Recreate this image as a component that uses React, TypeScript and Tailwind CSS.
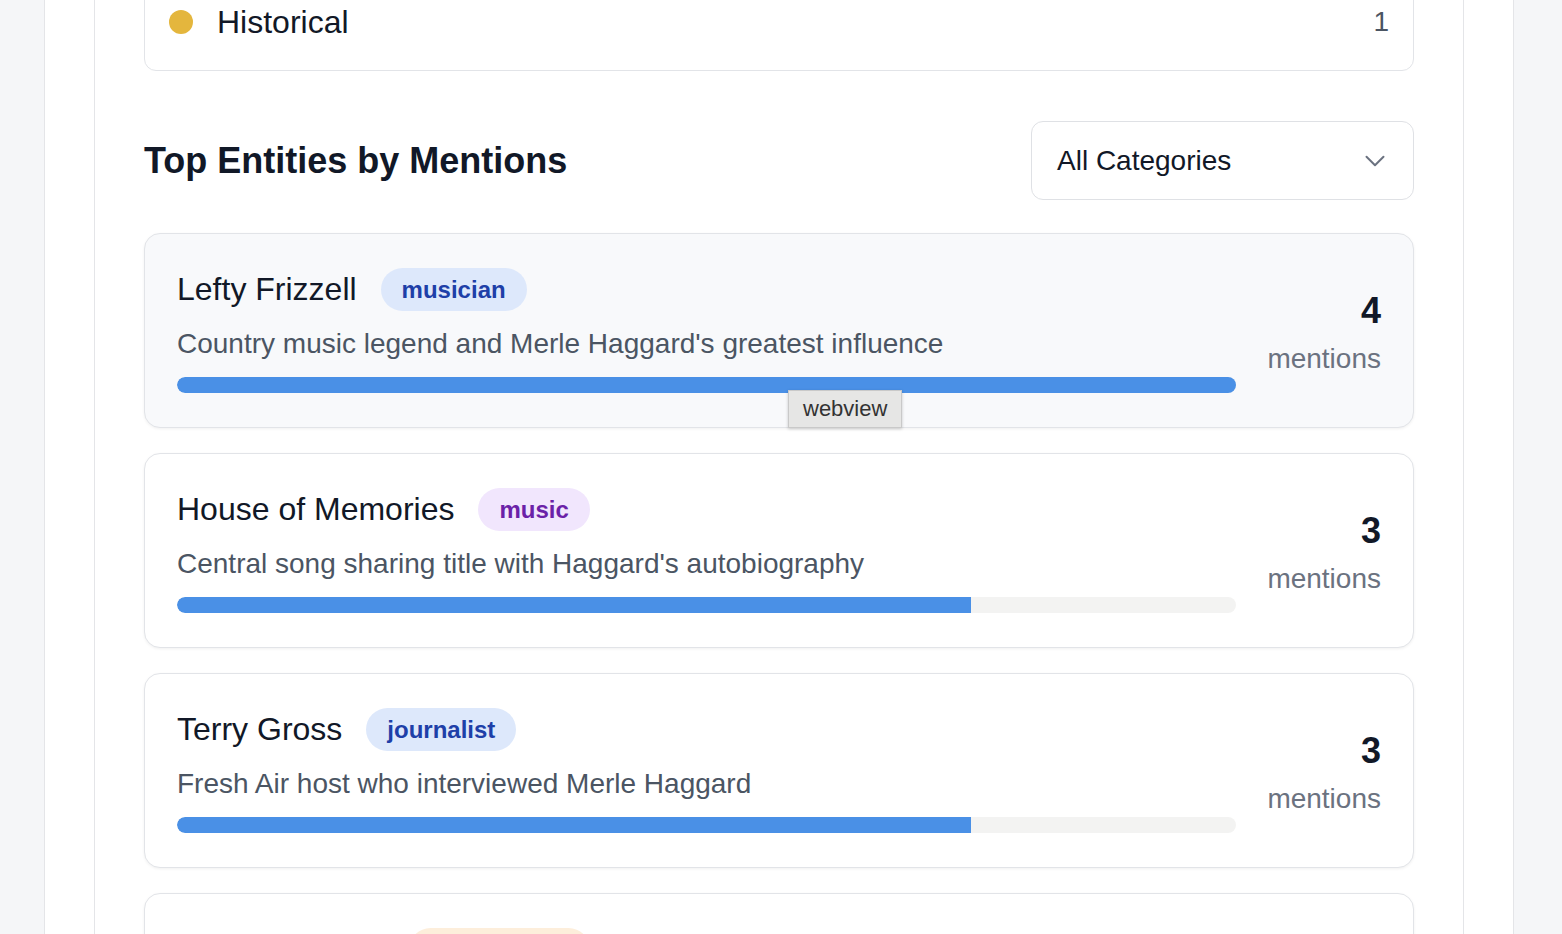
import { ChevronDown } from "lucide-react";

type Entity = {
  name: string;
  category: string;
  description: string;
  mentions: number;
};

const entities: Entity[] = [
  {
    name: "Lefty Frizzell",
    category: "musician",
    description: "Country music legend and Merle Haggard's greatest influence",
    mentions: 4,
  },
  {
    name: "House of Memories",
    category: "music",
    description: "Central song sharing title with Haggard's autobiography",
    mentions: 3,
  },
  {
    name: "Terry Gross",
    category: "journalist",
    description: "Fresh Air host who interviewed Merle Haggard",
    mentions: 3,
  },
  {
    name: "Bonnie Owens",
    category: "collaborator",
    description: "Singer, Haggard's wife and longtime harmony partner",
    mentions: 2,
  },
];

const badgeClass: Record<string, string> = {
  musician: "bg-[#dde8fb] text-[#1e3fa8]",
  journalist: "bg-[#dde8fb] text-[#1e3fa8]",
  music: "bg-[#f1e6fd] text-[#6b21a8]",
  collaborator: "bg-[#fdeedb] text-[#9a3412]",
};

const maxMentions = 4;

function EntityCard({ entity, active }: { entity: Entity; active?: boolean }) {
  const pct = (entity.mentions / maxMentions) * 100;
  return (
    <div
      className={`relative flex items-center gap-8 rounded-2xl border border-[#e2e4e8] px-8 pb-[34px] pt-[31px] shadow-[0_1px_3px_rgba(0,0,0,0.06)] ${
        active ? "bg-[#f8f9fb]" : "bg-white"
      }`}
    >
      <div className="min-w-0 flex-1">
        <div className="flex h-12 items-center gap-6">
          <h3 className="text-[32px] leading-[48px] text-[#111827]">{entity.name}</h3>
          <span
            className={`rounded-full px-[21px] py-[6px] text-[24px] font-bold leading-[31px] ${badgeClass[entity.category]}`}
          >
            {entity.category}
          </span>
        </div>
        <p className="mt-[10px] text-[28px] leading-[42px] text-[#4b5563]">{entity.description}</p>
        <div className="mt-[12px] h-4 w-full overflow-hidden rounded-full bg-[#f3f3f2]">
          <div className="h-full rounded-l-full bg-[#4a90e6]" style={{ width: `${pct}%` }} />
        </div>
      </div>
      <div className="mt-[5px] flex w-[113px] flex-col items-end">
        <span className="text-[36px] font-bold leading-[54px] text-[#111827]">{entity.mentions}</span>
        <span className="text-[28px] leading-[42px] text-[#6b7280]">mentions</span>
      </div>
      {active ? (
        <div className="absolute left-[643px] top-[156px] border border-[#c9c9c9] bg-[#e6e6e5] px-[14px] text-[22px] leading-[36px] text-[#333] shadow-[0_1px_3px_rgba(0,0,0,0.2)]">
          webview
        </div>
      ) : null}
    </div>
  );
}

export default function App() {
  return (
    <div
      className="h-[934px] overflow-hidden bg-[#f5f6f8]"
      style={{ fontFamily: '"Liberation Sans", Arial, sans-serif' }}
    >
      <div className="ml-[44px] min-h-[1000px] w-[1470px] border-x border-[#e4e5e8] bg-white px-[49px]">
        <div className="min-h-[1000px] border-x border-[#e4e5e8] px-[49px]">
          <div className="-mt-[27px]">
            <div className="flex items-center rounded-xl border border-[#e2e4e8] py-6 pl-6 pr-6">
              <span className="h-6 w-6 rounded-full bg-[#e4b63d]" />
              <span className="ml-6 flex-1 text-[32px] leading-[48px] text-[#111827]">Historical</span>
              <span className="text-[28px] leading-[48px] text-[#4b5563]">1</span>
            </div>

            <div className="mt-[50px] flex items-center justify-between">
              <h2 className="text-[36px] font-bold text-[#111827]">Top Entities by Mentions</h2>
              <div className="flex h-[79px] w-[383px] items-center justify-between rounded-xl border border-[#dfe1e5] bg-white pl-[25px] pr-[21px]">
                <span className="text-[28px] text-[#111827]">All Categories</span>
                <ChevronDown className="h-[34px] w-[34px] text-[#6b7280]" strokeWidth={1.4} />
              </div>
            </div>

            <div className="mt-[33px] flex flex-col gap-[25px]">
              {entities.map((e, i) => (
                <EntityCard key={e.name} entity={e} active={i === 0} />
              ))}
            </div>
          </div>
        </div>
      </div>
    </div>
  );
}
